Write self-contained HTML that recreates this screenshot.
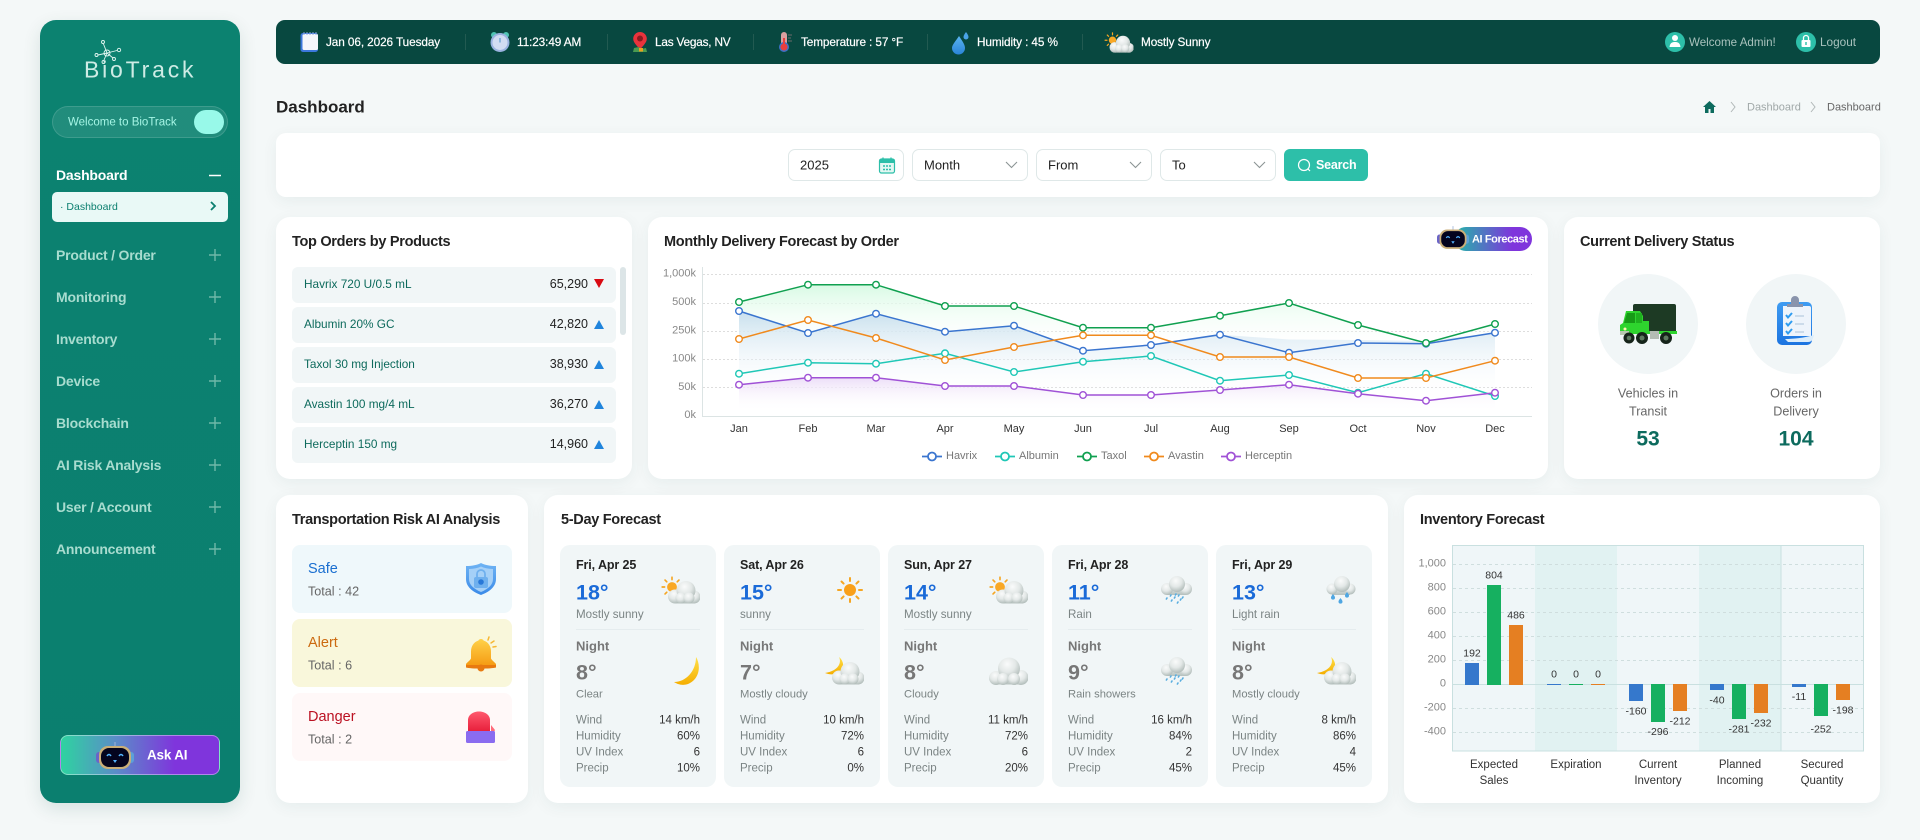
<!DOCTYPE html>
<html lang="en">
<head>
<meta charset="utf-8">
<title>BioTrack Dashboard</title>
<style>
*{box-sizing:border-box}
html,body{margin:0;padding:0;width:1920px;height:840px;overflow:hidden;background:#f4f8f8;font-family:"Liberation Sans",sans-serif;color:#222}
.b{position:absolute}
.card{position:absolute;background:#fff;border-radius:14px;box-shadow:0 4px 16px rgba(0,60,60,.06)}
.t{position:absolute;white-space:nowrap;transform:translateY(-50%);line-height:1}
.r{transform:translate(-100%,-50%)}
.c{transform:translate(-50%,-50%);text-align:center}
.h{font-size:14.5px;font-weight:700;color:#222;letter-spacing:-.3px}
.tb{font-size:11.8px;color:#fff;font-weight:400;-webkit-text-stroke:.2px #fff;letter-spacing:-.1px}
.sep{position:absolute;width:1px;top:34px;height:16px;background:#225a51}
.m{font-size:14px;font-weight:700;color:#a8dccf;left:56px;letter-spacing:-.2px}
.inp{position:absolute;top:149px;height:32px;width:116px;background:#fff;border:1px solid #dfe8e8;border-radius:7px}
.sel{font-size:13px;color:#222;top:165px}
.row{position:absolute;left:292px;width:324px;height:36px;background:#f1f6f7;border-radius:6px}
.nm{left:304px;font-size:11.8px;color:#0d6a5c}
.qt{left:588px;font-size:12.5px;color:#222}
.w{position:absolute;top:545px;width:156px;height:242px;background:#f1f6f7;border-radius:10px}
.d{font-size:12.5px;font-weight:700;color:#222;top:565px;letter-spacing:-.1px}
.tp{font-size:21.5px;font-weight:700;color:#1a6ad8;top:593px}
.cn{font-size:11.6px;color:#7b8484;top:615px}
.dv{position:absolute;height:1px;width:124px;top:629px;background:#e5ecee}
.n{font-size:13px;font-weight:700;color:#777;top:646px}
.tn{font-size:21.5px;font-weight:700;color:#777;top:673px}
.cd{font-size:11.2px;color:#7b8484;top:695px}
.sl{font-size:11.5px;color:#7b8484}
.sv{font-size:11.5px;color:#333}
.s1{top:721px}.s2{top:737px}.s3{top:753px}.s4{top:769px}
.rk{position:absolute;left:292px;width:220px;height:68px;border-radius:8px}
.rl{left:308px;font-size:14.5px}
.rt{left:308px;font-size:12.6px;color:#666}
</style>
</head>
<body>
<!-- Sidebar -->
<div class="b" style="left:40px;top:20px;width:200px;height:783px;border-radius:16px;background:linear-gradient(#0c8270,#0b7f6f);box-shadow:0 6px 18px rgba(0,70,60,.12)"></div>
<div class="t" style="left:84px;top:70px;font-size:23px;letter-spacing:2.8px;color:#dff5ef;font-weight:400;opacity:.92">BioTrack</div>
<div class="b" style="left:52px;top:106px;width:176px;height:32px;border-radius:16px;background:rgba(255,255,255,.09);border:1px solid rgba(255,255,255,.13)"></div>
<div class="t" style="left:68px;top:123px;font-size:11.5px;color:#a5f5e5">Welcome to BioTrack</div>
<div class="b" style="left:194px;top:110px;width:30px;height:24px;border-radius:12px;background:#98f9e9"></div>
<div class="t m" style="top:175px;color:#fff">Dashboard</div>
<div class="b" style="left:52px;top:192px;width:176px;height:30px;border-radius:5px;background:#e9f9f6"></div>
<div class="t" style="left:60px;top:207px;font-size:10.5px;color:#0b7f6f">· Dashboard</div>
<div class="t m" style="top:255px">Product / Order</div>
<div class="t m" style="top:297px">Monitoring</div>
<div class="t m" style="top:339px">Inventory</div>
<div class="t m" style="top:381px">Device</div>
<div class="t m" style="top:423px">Blockchain</div>
<div class="t m" style="top:465px">AI Risk Analysis</div>
<div class="t m" style="top:507px">User / Account</div>
<div class="t m" style="top:549px">Announcement</div>
<div class="b" style="left:60px;top:735px;width:160px;height:40px;border-radius:8px;background:linear-gradient(90deg,#2ed3a0 0%,#5b8cc8 35%,#7f35dc 72%);border:1px solid rgba(255,255,255,.4)"></div>
<div class="t" style="left:147px;top:755px;font-size:13.5px;font-weight:700;color:#fff;letter-spacing:-.2px">Ask AI</div>

<!-- Top bar -->
<div class="b" style="left:276px;top:20px;width:1604px;height:44px;border-radius:9px;background:#084840"></div>
<div class="t tb" style="left:326px;top:43px">Jan 06, 2026 Tuesday</div>
<div class="sep" style="left:465px"></div>
<div class="t tb" style="left:517px;top:43px">11:23:49 AM</div>
<div class="sep" style="left:607px"></div>
<div class="t tb" style="left:655px;top:43px;letter-spacing:-.2px">Las Vegas, NV</div>
<div class="sep" style="left:753px"></div>
<div class="t tb" style="left:801px;top:43px;letter-spacing:-.12px">Temperature : 57 °F</div>
<div class="sep" style="left:927px"></div>
<div class="t tb" style="left:977px;top:43px;letter-spacing:-.12px">Humidity : 45 %</div>
<div class="sep" style="left:1082px"></div>
<div class="t tb" style="left:1141px;top:43px;letter-spacing:-.12px">Mostly Sunny</div>
<div class="t" style="left:1689px;top:43px;font-size:11.6px;color:#a9c2bd">Welcome Admin!</div>
<div class="t" style="left:1820px;top:43px;font-size:11.8px;color:#a9c2bd">Logout</div>

<!-- Heading -->
<div class="t" style="left:276px;top:107px;font-size:17px;font-weight:700;color:#222">Dashboard</div>
<div class="t" style="left:1747px;top:107.500px;font-size:11px;color:#a0a8a8">Dashboard</div>
<div class="t" style="left:1827px;top:107.500px;font-size:11px;color:#666">Dashboard</div>

<!-- Filter -->
<div class="card" style="left:276px;top:133px;width:1604px;height:64px;border-radius:10px"></div>
<div class="inp" style="left:788px"></div>
<div class="inp" style="left:912px"></div>
<div class="inp" style="left:1036px"></div>
<div class="inp" style="left:1160px"></div>
<div class="t sel" style="left:800px">2025</div>
<div class="t sel" style="left:924px">Month</div>
<div class="t sel" style="left:1048px">From</div>
<div class="t sel" style="left:1172px">To</div>
<div class="b" style="left:1284px;top:149px;width:84px;height:32px;border-radius:6px;background:#2dbfa9"></div>
<div class="t" style="left:1316px;top:165px;font-size:12.5px;font-weight:700;color:#fff;letter-spacing:-.2px">Search</div>

<!-- Row 2 cards -->
<div class="card" style="left:276px;top:217px;width:356px;height:262px"></div>
<div class="card" style="left:648px;top:217px;width:900px;height:262px"></div>
<div class="card" style="left:1564px;top:217px;width:316px;height:262px"></div>
<div class="t h" style="left:292px;top:242px">Top Orders by Products</div>
<div class="t h" style="left:664px;top:242px">Monthly Delivery Forecast by Order</div>
<div class="t h" style="left:1580px;top:242px">Current Delivery Status</div>

<!-- Top orders -->
<div class="row" style="top:267px"></div>
<div class="row" style="top:307px"></div>
<div class="row" style="top:347px"></div>
<div class="row" style="top:387px"></div>
<div class="row" style="top:427px"></div>
<div class="b" style="left:620px;top:267px;width:6px;height:68px;border-radius:3px;background:#dce5e7"></div>
<div class="t nm" style="top:285px">Havrix 720 U/0.5 mL</div><div class="t r qt" style="top:284px">65,290</div>
<div class="t nm" style="top:325px">Albumin 20% GC</div><div class="t r qt" style="top:324px">42,820</div>
<div class="t nm" style="top:365px">Taxol 30 mg Injection</div><div class="t r qt" style="top:364px">38,930</div>
<div class="t nm" style="top:405px">Avastin 100 mg/4 mL</div><div class="t r qt" style="top:404px">36,270</div>
<div class="t nm" style="top:445px">Herceptin 150 mg</div><div class="t r qt" style="top:444px">14,960</div>

<!-- AI forecast -->
<div class="b" style="left:1454px;top:227px;width:78px;height:24px;border-radius:12px;background:linear-gradient(90deg,#22b8a8,#7f35dc 75%)"></div>
<div class="t" style="left:1472px;top:240px;font-size:11px;font-weight:700;color:#fff;letter-spacing:-.4px">AI Forecast</div>

<!-- Delivery -->
<div class="b" style="left:1598px;top:274px;width:100px;height:100px;border-radius:50%;background:#f1f6f7"></div>
<div class="b" style="left:1746px;top:274px;width:100px;height:100px;border-radius:50%;background:#f1f6f7"></div>
<div class="t c" style="left:1648px;top:394px;font-size:12.6px;color:#666">Vehicles in</div>
<div class="t c" style="left:1648px;top:412px;font-size:12.6px;color:#666">Transit</div>
<div class="t c" style="left:1648px;top:439px;font-size:21px;font-weight:700;color:#0d6b5e">53</div>
<div class="t c" style="left:1796px;top:394px;font-size:12.6px;color:#666">Orders in</div>
<div class="t c" style="left:1796px;top:412px;font-size:12.6px;color:#666">Delivery</div>
<div class="t c" style="left:1796px;top:439px;font-size:21px;font-weight:700;color:#0d6b5e">104</div>

<!-- Row 3 cards -->
<div class="card" style="left:276px;top:495px;width:252px;height:308px"></div>
<div class="card" style="left:544px;top:495px;width:844px;height:308px"></div>
<div class="card" style="left:1404px;top:495px;width:476px;height:308px"></div>
<div class="t h" style="left:292px;top:520px">Transportation Risk AI Analysis</div>
<div class="t h" style="left:561px;top:520px">5-Day Forecast</div>
<div class="t h" style="left:1420px;top:520px">Inventory Forecast</div>

<!-- Risk -->
<div class="rk" style="top:545px;background:#eff8fb"></div>
<div class="rk" style="top:619px;background:#f9f7db"></div>
<div class="rk" style="top:693px;background:#fff8f8"></div>
<div class="t rl" style="top:569px;color:#1a6fd0">Safe</div><div class="t rt" style="top:592px">Total : 42</div>
<div class="t rl" style="top:643px;color:#cc6a10">Alert</div><div class="t rt" style="top:666px">Total : 6</div>
<div class="t rl" style="top:717px;color:#bb1122">Danger</div><div class="t rt" style="top:740px">Total : 2</div>

<!-- Weather cards -->
<div class="w" style="left:560px"></div><div class="w" style="left:724px"></div><div class="w" style="left:888px"></div><div class="w" style="left:1052px"></div><div class="w" style="left:1216px"></div>
<div class="dv" style="left:576px"></div><div class="dv" style="left:740px"></div><div class="dv" style="left:904px"></div><div class="dv" style="left:1068px"></div><div class="dv" style="left:1232px"></div>

<div class="t d" style="left:576px">Fri, Apr 25</div><div class="t tp" style="left:576px">18°</div><div class="t cn" style="left:576px">Mostly sunny</div><div class="t n" style="left:576px">Night</div><div class="t tn" style="left:576px">8°</div><div class="t cd" style="left:576px">Clear</div>
<div class="t sl s1" style="left:576px">Wind</div><div class="t sl s2" style="left:576px">Humidity</div><div class="t sl s3" style="left:576px">UV Index</div><div class="t sl s4" style="left:576px">Precip</div>
<div class="t r sv s1" style="left:700px">14 km/h</div><div class="t r sv s2" style="left:700px">60%</div><div class="t r sv s3" style="left:700px">6</div><div class="t r sv s4" style="left:700px">10%</div>

<div class="t d" style="left:740px">Sat, Apr 26</div><div class="t tp" style="left:740px">15°</div><div class="t cn" style="left:740px">sunny</div><div class="t n" style="left:740px">Night</div><div class="t tn" style="left:740px">7°</div><div class="t cd" style="left:740px">Mostly cloudy</div>
<div class="t sl s1" style="left:740px">Wind</div><div class="t sl s2" style="left:740px">Humidity</div><div class="t sl s3" style="left:740px">UV Index</div><div class="t sl s4" style="left:740px">Precip</div>
<div class="t r sv s1" style="left:864px">10 km/h</div><div class="t r sv s2" style="left:864px">72%</div><div class="t r sv s3" style="left:864px">6</div><div class="t r sv s4" style="left:864px">0%</div>

<div class="t d" style="left:904px">Sun, Apr 27</div><div class="t tp" style="left:904px">14°</div><div class="t cn" style="left:904px">Mostly sunny</div><div class="t n" style="left:904px">Night</div><div class="t tn" style="left:904px">8°</div><div class="t cd" style="left:904px">Cloudy</div>
<div class="t sl s1" style="left:904px">Wind</div><div class="t sl s2" style="left:904px">Humidity</div><div class="t sl s3" style="left:904px">UV Index</div><div class="t sl s4" style="left:904px">Precip</div>
<div class="t r sv s1" style="left:1028px">11 km/h</div><div class="t r sv s2" style="left:1028px">72%</div><div class="t r sv s3" style="left:1028px">6</div><div class="t r sv s4" style="left:1028px">20%</div>

<div class="t d" style="left:1068px">Fri, Apr 28</div><div class="t tp" style="left:1068px">11°</div><div class="t cn" style="left:1068px">Rain</div><div class="t n" style="left:1068px">Night</div><div class="t tn" style="left:1068px">9°</div><div class="t cd" style="left:1068px">Rain showers</div>
<div class="t sl s1" style="left:1068px">Wind</div><div class="t sl s2" style="left:1068px">Humidity</div><div class="t sl s3" style="left:1068px">UV Index</div><div class="t sl s4" style="left:1068px">Precip</div>
<div class="t r sv s1" style="left:1192px">16 km/h</div><div class="t r sv s2" style="left:1192px">84%</div><div class="t r sv s3" style="left:1192px">2</div><div class="t r sv s4" style="left:1192px">45%</div>

<div class="t d" style="left:1232px">Fri, Apr 29</div><div class="t tp" style="left:1232px">13°</div><div class="t cn" style="left:1232px">Light rain</div><div class="t n" style="left:1232px">Night</div><div class="t tn" style="left:1232px">8°</div><div class="t cd" style="left:1232px">Mostly cloudy</div>
<div class="t sl s1" style="left:1232px">Wind</div><div class="t sl s2" style="left:1232px">Humidity</div><div class="t sl s3" style="left:1232px">UV Index</div><div class="t sl s4" style="left:1232px">Precip</div>
<div class="t r sv s1" style="left:1356px">8 km/h</div><div class="t r sv s2" style="left:1356px">86%</div><div class="t r sv s3" style="left:1356px">4</div><div class="t r sv s4" style="left:1356px">45%</div>

<!-- Graphics overlay -->
<svg class="b" style="left:0;top:0" width="1920" height="840" viewBox="0 0 1920 840" font-family="Liberation Sans, sans-serif">
<defs>
<radialGradient id="pf" cx=".42" cy=".3" r=".75"><stop offset="0" stop-color="#fafbfb"/><stop offset=".5" stop-color="#e3e8e7"/><stop offset="1" stop-color="#aab6b3"/></radialGradient>
<linearGradient id="cb" x1="0" y1="0" x2="0" y2="1"><stop offset="0" stop-color="#e0e5e4"/><stop offset="1" stop-color="#b6c1be"/></linearGradient>
<linearGradient id="mg" x1="0" y1="0" x2="0" y2="1"><stop offset="0" stop-color="#ffe04a"/><stop offset="1" stop-color="#f5ae00"/></linearGradient>
<linearGradient id="ag" x1="0" y1="0" x2="0" y2="1"><stop offset="0" stop-color="#ffd24a"/><stop offset="1" stop-color="#f59a12"/></linearGradient>
<linearGradient id="sg" x1="0" y1="0" x2="0" y2="1"><stop offset="0" stop-color="#6fb4f4"/><stop offset="1" stop-color="#3a8ae8"/></linearGradient>
<linearGradient id="rg" x1="0" y1="0" x2="0" y2="1"><stop offset="0" stop-color="#ff5a6e"/><stop offset="1" stop-color="#e8203c"/></linearGradient>
<linearGradient id="dg" x1="0" y1="0" x2="0" y2="1"><stop offset="0" stop-color="#5ab4f0"/><stop offset="1" stop-color="#2a84d8"/></linearGradient>
<linearGradient id="cpb" x1="0" y1="0" x2="0" y2="1"><stop offset="0" stop-color="#3f9cf2"/><stop offset="1" stop-color="#1c74e0"/></linearGradient>
<linearGradient id="a1" gradientUnits="userSpaceOnUse" x1="0" y1="285" x2="0" y2="350"><stop offset="0" stop-color="#d8fae4"/><stop offset="1" stop-color="#fff" stop-opacity="0"/></linearGradient>
<linearGradient id="a2" gradientUnits="userSpaceOnUse" x1="0" y1="311" x2="0" y2="398"><stop offset="0" stop-color="#c9e0ee"/><stop offset="1" stop-color="#fff" stop-opacity="0"/></linearGradient>
<linearGradient id="a3" gradientUnits="userSpaceOnUse" x1="0" y1="378" x2="0" y2="412"><stop offset="0" stop-color="#eddff8"/><stop offset="1" stop-color="#fff" stop-opacity="0"/></linearGradient>
<marker id="mH" markerWidth="10" markerHeight="10" refX="5" refY="5" markerUnits="userSpaceOnUse"><circle cx="5" cy="5" r="3.3" fill="#fff" stroke="#3a75cf" stroke-width="1.4"/></marker>
<marker id="mA" markerWidth="10" markerHeight="10" refX="5" refY="5" markerUnits="userSpaceOnUse"><circle cx="5" cy="5" r="3.3" fill="#fff" stroke="#1fc7b6" stroke-width="1.4"/></marker>
<marker id="mT" markerWidth="10" markerHeight="10" refX="5" refY="5" markerUnits="userSpaceOnUse"><circle cx="5" cy="5" r="3.3" fill="#fff" stroke="#10a050" stroke-width="1.4"/></marker>
<marker id="mV" markerWidth="10" markerHeight="10" refX="5" refY="5" markerUnits="userSpaceOnUse"><circle cx="5" cy="5" r="3.3" fill="#fff" stroke="#f08a1d" stroke-width="1.4"/></marker>
<marker id="mC" markerWidth="10" markerHeight="10" refX="5" refY="5" markerUnits="userSpaceOnUse"><circle cx="5" cy="5" r="3.3" fill="#fff" stroke="#a052d6" stroke-width="1.4"/></marker>
<g id="sunrays" stroke="#f5a623" stroke-width="2" stroke-linecap="round"><path d="M0 -9V-12M0 9V12M-9 0H-12M9 0H12M-6.4 -6.4L-8.5 -8.5M6.4 -6.4L8.5 -8.5M-6.4 6.4L-8.5 8.5M6.4 6.4L8.5 8.5"/></g>
<symbol id="cloudA" viewBox="0 0 40 28"><rect x="15" y="19" width="20" height="8.500" fill="url(#cb)"/><circle cx="15" cy="20.500" r="7" fill="url(#pf)"/><circle cx="34" cy="21" r="6.500" fill="url(#pf)"/><circle cx="26" cy="14.500" r="9.500" fill="url(#pf)"/><circle cx="21" cy="22" r="5.500" fill="url(#pf)"/><circle cx="29" cy="22" r="5.500" fill="url(#pf)"/></symbol>
<symbol id="sc" viewBox="0 0 40 28"><g transform="translate(12 11) scale(.82)"><use href="#sunrays"/><circle r="6" fill="#f9a825"/></g><use href="#cloudA" width="40" height="28"/></symbol>
<symbol id="sn" viewBox="0 0 40 28"><g transform="translate(26 14)"><use href="#sunrays"/><circle r="6" fill="#f9a01a"/></g></symbol>
<symbol id="mn" viewBox="0 0 40 28"><path d="M36 0C41 8 40 22 28 27C22 29 17 27 14 25C26 25 36 14 36 0Z" fill="url(#mg)"/></symbol>
<symbol id="mc" viewBox="0 0 40 28"><path d="M15 0C18 6 14 14 1 16C6 18 12 18 17 14C21 10 19 3 15 0Z" fill="url(#mg)"/><use href="#cloudA" width="40" height="28"/></symbol>
<symbol id="cl" viewBox="0 0 40 28"><rect x="8" y="19" width="25" height="8.500" fill="url(#cb)"/><circle cx="8" cy="21" r="7" fill="url(#pf)"/><circle cx="33" cy="20.500" r="7.500" fill="url(#pf)"/><circle cx="21" cy="11.500" r="11" fill="url(#pf)"/><circle cx="15" cy="22" r="6" fill="url(#pf)"/><circle cx="26" cy="22" r="6" fill="url(#pf)"/></symbol>
<symbol id="rc" viewBox="0 0 40 28"><rect x="15" y="12" width="19" height="7" fill="url(#cb)"/><circle cx="15" cy="13" r="6" fill="url(#pf)"/><circle cx="34" cy="13" r="6" fill="url(#pf)"/><circle cx="25" cy="8" r="8" fill="url(#pf)"/><g stroke="#5aaee0" stroke-width="1.600" stroke-linecap="round"><path d="M15 22l-.6 1M19 19l-.6 1M23 21l-.6 1M27 19l-.6 1M31 21l-.6 1M20 24l-.6 1M26 26l-.6 1M29 23l-.6 1M24 18l-.6 1"/></g></symbol>
<symbol id="lr" viewBox="0 0 40 28"><rect x="16" y="12" width="18" height="7" fill="url(#cb)"/><circle cx="16" cy="13" r="5.500" fill="url(#pf)"/><circle cx="34" cy="13" r="5.500" fill="url(#pf)"/><circle cx="26" cy="8" r="8" fill="url(#pf)"/><g fill="#4ea6e2"><path d="M17 18c1.500 2 2 2.800 2 3.600a2 2 0 0 1-4 0c0-.8.500-1.600 2-3.600ZM31 16c1.500 2 2 2.800 2 3.600a2 2 0 0 1-4 0c0-.8.500-1.600 2-3.600ZM24.500 22c1.500 2 2 2.800 2 3.600a2 2 0 0 1-4 0c0-.8.500-1.600 2-3.600Z"/></g></symbol>
<symbol id="robot" viewBox="0 0 38 27"><path d="M19 0V5" stroke="#9fb4d8" stroke-width="1"/><rect x="0" y="10" width="6" height="11" rx="3" fill="#6a64c8"/><rect x="32" y="10" width="6" height="11" rx="3" fill="#5ca0d8"/><rect x="3" y="4" width="32" height="23" rx="9" fill="#c9ae78"/><rect x="5" y="6" width="28" height="19" rx="8" fill="#04041e"/><path d="M11 14q2-3 4 0M23 14q2-3 4 0" fill="none" stroke="#54b4ff" stroke-width="1.500"/><path d="M17 18h4l-2 3Z" fill="#54b4ff"/></symbol>
</defs>

<!-- Logo -->
<g stroke="#e2f6f1" fill="none" stroke-width=".9">
<path d="M107 53L103.500 44M107 53L117 50.500M107 53L98 55M107 53L113 58M107 53L104 60"/>
<circle cx="107" cy="53" r="3"/><circle cx="103" cy="42" r="1.500"/><circle cx="119" cy="50" r="1.700"/><circle cx="96.500" cy="55" r="1.500"/><circle cx="114" cy="59" r="1.500"/><circle cx="103.500" cy="62" r="1.500"/>
</g>
<!-- Sidebar marks -->
<path d="M209 175.500H221" stroke="#fff" stroke-width="1.500"/>
<path d="M211 202l4 4-4 4" stroke="#0b7f6f" stroke-width="1.800" fill="none"/>
<g stroke="#6fb8a8" stroke-width="1.400"><path d="M209 255H221M215 249V261M209 297H221M215 291V303M209 339H221M215 333V345M209 381H221M215 375V387M209 423H221M215 417V429M209 465H221M215 459V471M209 507H221M215 501V513M209 549H221M215 543V555"/></g>
<use href="#robot" x="96" y="742" width="38" height="27"/>

<!-- Top bar icons -->
<g>
<rect x="300.500" y="33" width="17.500" height="19" rx="2.500" fill="#3c78dc"/><rect x="302.500" y="34" width="15.500" height="16" rx="1.500" fill="#f4f6fb"/><path d="M304 32v3M307 32v3M310 32v3M313 32v3M316 32v3" stroke="#8fa6d8" stroke-width="1"/>
<circle cx="494" cy="35" r="3" fill="#4fc4b4"/><circle cx="506" cy="35" r="3" fill="#4fc4b4"/><circle cx="500" cy="42.500" r="9.500" fill="#9bb3e0"/><circle cx="500" cy="42.500" r="7.500" fill="#d2dcf2"/><path d="M500 38v4.500" stroke="#4a90c8" stroke-width="1"/>
<path d="M640 32a6.800 6.800 0 0 1 6.800 6.800c0 4-4 7-6.800 11c-2.800-4-6.800-7-6.800-11A6.800 6.800 0 0 1 640 32Z" fill="#e8333c"/><circle cx="640" cy="38.500" r="3" fill="#8c1a20"/><path d="M634 48l5-1 2 2 5-1 1 4h-14Z" fill="#4a9a50"/><rect x="639" y="48" width="4" height="3.500" fill="#e8a020"/>
<rect x="781" y="32" width="6" height="17" rx="3" fill="#d9a0a0"/><circle cx="784" cy="47" r="5" fill="#3b72c8"/><circle cx="784" cy="47" r="3.500" fill="#e83e3e"/><rect x="783" y="38" width="2" height="8" fill="#e83e3e"/><path d="M788 35h4M788 38h3M788 41h4" stroke="#6a6a6a" stroke-width="1"/>
<path d="M959 36c4 6 6 9 6 12a6.500 6.500 0 0 1-13 0c0-3 3-6 7-12Z" fill="url(#dg)"/><path d="M966 32c1.500 2 2.500 3.500 2.500 5a2.500 2.500 0 0 1-5 0c0-1.500 1-3 2.500-5Z" fill="#4aa4e6"/>
<use href="#sc" x="1103" y="32" width="31" height="21"/>
<circle cx="1675" cy="42" r="10" fill="#2dbfa9"/><circle cx="1675" cy="38" r="3" fill="#fff"/><path d="M1669.500 47c.5-4 2.500-5 5.500-5s5 1 5.500 5Z" fill="#fff"/>
<circle cx="1806" cy="42" r="10" fill="#2dbfa9"/><rect x="1801.500" y="40" width="9" height="7" rx="1" fill="#fff"/><path d="M1803.500 40v-2a2.500 2.500 0 0 1 5 0v2" fill="none" stroke="#fff" stroke-width="1.300"/><rect x="1805.300" y="42" width="1.400" height="3" fill="#2dbfa9"/>
</g>

<!-- Breadcrumb -->
<path d="M1709.500 101l-6.500 6h2v6h3.500v-4h2v4h3.500v-6h2Z" fill="#0d6b5e"/>
<path d="M1731 102l4 5-4 5M1811 102l4 5-4 5" stroke="#b0b8b8" fill="none" stroke-width="1"/>

<!-- Filter icons -->
<rect x="879.500" y="159" width="15" height="14" rx="2" fill="#e3f7f2" stroke="#2dbfa9" stroke-width="1.200"/><rect x="879.500" y="159" width="15" height="4" fill="#2dbfa9"/><path d="M883 157.500v3M891 157.500v3" stroke="#2dbfa9" stroke-width="1.300"/><path d="M883 166h8M883 169.500h8" stroke="#2dbfa9" stroke-width="1.600" stroke-dasharray="2 1"/>
<path d="M1006 162l5.500 5.500 5.500-5.500M1130 162l5.500 5.500 5.500-5.500M1254 162l5.500 5.500 5.500-5.500" fill="none" stroke="#8b9494" stroke-width="1.100"/>
<circle cx="1304" cy="165" r="5.500" fill="none" stroke="#fff" stroke-width="1.200"/><path d="M1308 169l2 2" stroke="#fff" stroke-width="1.200"/>

<!-- Order triangles -->
<path d="M594 279h10l-5 9Z" fill="#d90a12"/>
<path d="M594 329h10l-5-9ZM594 369h10l-5-9ZM594 409h10l-5-9ZM594 449h10l-5-9Z" fill="#2084dc"/>

<!-- Line chart -->
<g stroke="#ddd" stroke-dasharray="2 2" stroke-width="1"><path d="M703 274.500H1532M703 303.500H1532M703 331.500H1532M703 359.500H1532M703 387.500H1532"/></g>
<path d="M702.500 267V416.500H1532" fill="none" stroke="#dce4e4" stroke-width="1"/>
<polygon points="739,302 808,284.700 876,284.700 945,306 1014,306 1083,327.700 1151,327.700 1220,315.700 1289,303 1358,325 1426,343 1495,324 1495,412 739,412" fill="url(#a1)"/>
<polygon points="739,311 808,333 876,313.700 945,331.700 1014,325.700 1083,350.700 1151,345 1220,334.700 1289,339.500 1358,340 1426,341 1495,332.700 1495,412 739,412" fill="url(#a2)"/>
<polygon points="739,384.700 808,377.700 876,377.700 945,386 1014,386 1083,395 1151,395 1220,390 1289,384.700 1358,393.700 1426,400.700 1495,392.700 1495,412 739,412" fill="url(#a3)"/>
<g fill="none" stroke-width="1.500">
<polyline stroke="#3a75cf" marker-start="url(#mH)" marker-mid="url(#mH)" marker-end="url(#mH)" points="739,311 808,333 876,313.700 945,331.700 1014,325.700 1083,350.700 1151,345 1220,334.700 1289,352.700 1358,343 1426,343.700 1495,332.700"/>
<polyline stroke="#1fc7b6" marker-start="url(#mA)" marker-mid="url(#mA)" marker-end="url(#mA)" points="739,373.700 808,362.700 876,363.700 945,353.300 1014,372 1083,361.700 1151,356 1220,380.700 1289,375 1358,392.700 1426,373.700 1495,396"/>
<polyline stroke="#10a050" marker-start="url(#mT)" marker-mid="url(#mT)" marker-end="url(#mT)" points="739,302 808,284.700 876,284.700 945,306 1014,306 1083,327.700 1151,327.700 1220,315.700 1289,303 1358,325 1426,343 1495,324"/>
<polyline stroke="#f08a1d" marker-start="url(#mV)" marker-mid="url(#mV)" marker-end="url(#mV)" points="739,339 808,320 876,338 945,360 1014,347 1083,335.300 1151,335.300 1220,357 1289,357 1358,378 1426,378 1495,360.700"/>
<polyline stroke="#a052d6" marker-start="url(#mC)" marker-mid="url(#mC)" marker-end="url(#mC)" points="739,384.700 808,377.700 876,377.700 945,386 1014,386 1083,395 1151,395 1220,390 1289,384.700 1358,393.700 1426,400.700 1495,392.700"/>
</g>
<g font-size="11" fill="#888" text-anchor="end" dominant-baseline="central"><text x="696" y="273.500">1,000k</text><text x="696" y="302">500k</text><text x="696" y="330.500">250k</text><text x="696" y="358.500">100k</text><text x="696" y="387">50k</text><text x="696" y="415">0k</text></g>
<g font-size="11" fill="#333" text-anchor="middle" dominant-baseline="central"><text x="739" y="429">Jan</text><text x="808" y="429">Feb</text><text x="876" y="429">Mar</text><text x="945" y="429">Apr</text><text x="1014" y="429">May</text><text x="1083" y="429">Jun</text><text x="1151" y="429">Jul</text><text x="1220" y="429">Aug</text><text x="1289" y="429">Sep</text><text x="1358" y="429">Oct</text><text x="1426" y="429">Nov</text><text x="1495" y="429">Dec</text></g>
<g fill="#fff" stroke-width="1.800">
<path d="M922 456.500H942" stroke="#3a75cf"/><circle cx="932" cy="456.500" r="4" stroke="#3a75cf"/>
<path d="M995 456.500H1015" stroke="#1fc7b6"/><circle cx="1005" cy="456.500" r="4" stroke="#1fc7b6"/>
<path d="M1077 456.500H1097" stroke="#10a050"/><circle cx="1087" cy="456.500" r="4" stroke="#10a050"/>
<path d="M1144 456.500H1164" stroke="#f08a1d"/><circle cx="1154" cy="456.500" r="4" stroke="#f08a1d"/>
<path d="M1221 456.500H1241" stroke="#a052d6"/><circle cx="1231" cy="456.500" r="4" stroke="#a052d6"/>
</g>
<g font-size="11" fill="#777" dominant-baseline="central"><text x="946" y="456">Havrix</text><text x="1019" y="456">Albumin</text><text x="1101" y="456">Taxol</text><text x="1168" y="456">Avastin</text><text x="1245" y="456">Herceptin</text></g>
<use href="#robot" x="1437" y="225" width="32" height="25"/>

<!-- Truck -->
<g>
<rect x="1633" y="304" width="43" height="29" rx="2" fill="#1d3a24"/>
<path d="M1620 334v-9l3-2 3-12h14l3 5v5h6v13h-29Z" fill="#2ed42e"/><path d="M1627 313h8v10h-11Z" fill="#179a17"/><rect x="1636" y="313" width="6" height="10" fill="#1fb01f"/><rect x="1649" y="331" width="28" height="3" fill="#2ed42e"/><rect x="1620" y="331" width="9" height="4" fill="#b8c8b0"/><circle cx="1625" cy="329" r="1.500" fill="#fff7b0"/><rect x="1650" y="331" width="9" height="8" fill="#b4bcb4"/>
<circle cx="1629" cy="338" r="5.500" fill="#16241a"/><circle cx="1629" cy="338" r="2.300" fill="#5e7a60"/><circle cx="1642" cy="338" r="6" fill="#16241a"/><circle cx="1642" cy="338" r="2.500" fill="#5e7a60"/><circle cx="1666" cy="338" r="6" fill="#16241a"/><circle cx="1666" cy="338" r="2.500" fill="#5e7a60"/>
</g>
<!-- Clipboard -->
<g>
<rect x="1777" y="302" width="35" height="43" rx="5" fill="url(#cpb)"/>
<path d="M1783 306h26a2 2 0 0 1 2 2v28h-28Z" fill="#eef4fb"/>
<path d="M1791 304v-4a4 4 0 0 1 8 0v4h4v3h-16v-3Z" fill="#8a94ac"/>
<path d="M1786 315l2 2.500 4-4.500M1786 323l2 2.500 4-4.500M1786 331l2 2.500 4-4.500" fill="none" stroke="#2f9cf0" stroke-width="2"/>
<path d="M1795 316h9M1795 324h9M1795 332h9" stroke="#b8cce0" stroke-width="1.300"/>
<path d="M1785 339c8 0 19-1 29-4-1 4-2 7-6 7h-20Z" fill="#dcedfb"/>
</g>

<!-- Risk icons -->
<path d="M481 563c4 2 9 3 15 3v13c0 8-7 13-15 16-8-3-15-8-15-16v-13c6 0 11-1 15-3Z" fill="url(#sg)"/><path d="M481 566.500c3 1.500 7 2.300 12 2.500v10c0 6-5 10-12 13-7-3-12-7-12-13v-10c5-.2 9-1 12-2.500Z" fill="#a5d0f7"/><rect x="474" y="577" width="14" height="11" rx="2" fill="#6fb0ee"/><path d="M477 577v-3a4 4 0 0 1 8 0v3" fill="none" stroke="#6fb0ee" stroke-width="1.800"/><circle cx="481" cy="582" r="2.800" fill="#2878d8"/>
<path d="M481 639c1.500 0 2.500 1 2.500 1.500c5 1.500 7.500 6 7.500 11v7c1 2 3.500 3.500 5 5.500v2h-30v-2c1.500-2 4-3.500 5-5.500v-7c0-5 2.500-9.500 7.500-11c0-.5 1-1.500 2.500-1.500Z" fill="url(#ag)"/><path d="M466 665h30v2.500c-5 1.500-25 1.500-30 0Z" fill="#e87a10"/><circle cx="481" cy="668" r="3.500" fill="#e87a10"/><path d="M488 640l1-3M491 643l3-2M493 647l3-.5" stroke="#f7b733" stroke-width="1.500" stroke-linecap="round"/>
<path d="M468 731v-11c0-5 5-8.500 11-8.500s11 3.500 11 8.500v11Z" fill="url(#rg)"/><path d="M491 725l4 5-1 2h-3Z" fill="#ff6a7a"/><rect x="466" y="731" width="29" height="12" rx="1.500" fill="#8a6cf0"/>

<!-- Weather icons -->
<use href="#sc" x="660" y="576" width="40" height="28"/><use href="#mn" x="660" y="657" width="40" height="28"/>
<use href="#sn" x="824" y="576" width="40" height="28"/><use href="#mc" x="824" y="657" width="40" height="28"/>
<use href="#sc" x="988" y="576" width="40" height="28"/><use href="#cl" x="988" y="657" width="40" height="28"/>
<use href="#rc" x="1152" y="576" width="40" height="28"/><use href="#rc" x="1152" y="657" width="40" height="28"/>
<use href="#lr" x="1316" y="576" width="40" height="28"/><use href="#mc" x="1316" y="657" width="40" height="28"/>

<!-- Inventory chart -->
<rect x="1452.500" y="545.500" width="411" height="205.500" fill="#eff6f8"/>
<rect x="1535" y="546" width="82" height="205" fill="#e1f2f2"/><rect x="1699" y="546" width="82" height="205" fill="#e1f2f2"/>
<g stroke="#cfdede" stroke-width="1" stroke-dasharray="3 3"><path d="M1453 564.500H1863M1453 588.500H1863M1453 612.500H1863M1453 636.500H1863M1453 660.500H1863M1453 708.500H1863M1453 732.500H1863"/></g>
<path d="M1453 684.500H1863" stroke="#c9e0e0" stroke-width="1"/><path d="M1781 546V751" stroke="#c9e0e0" stroke-width="1"/>
<rect x="1452.500" y="545.500" width="411" height="205.500" fill="none" stroke="#c9e0e0" stroke-width="1"/>
<g fill="#3578cc"><rect x="1465" y="663" width="14" height="22"/><rect x="1547" y="684" width="14" height="1"/><rect x="1629" y="684" width="14" height="17"/><rect x="1710" y="684" width="14" height="6"/><rect x="1792" y="684" width="14" height="3"/></g>
<g fill="#16b060"><rect x="1487" y="585" width="14" height="100"/><rect x="1569" y="684" width="14" height="1"/><rect x="1651" y="684" width="14" height="38"/><rect x="1732" y="684" width="14" height="35"/><rect x="1814" y="684" width="14" height="32"/></g>
<g fill="#e57f22"><rect x="1509" y="625" width="14" height="60"/><rect x="1591" y="684" width="14" height="1"/><rect x="1673" y="684" width="14" height="27"/><rect x="1754" y="684" width="14" height="29"/><rect x="1836" y="684" width="14" height="16"/></g>
<g font-size="11" fill="#888" text-anchor="end" dominant-baseline="central"><text x="1446" y="563.500">1,000</text><text x="1446" y="587.500">800</text><text x="1446" y="611.500">600</text><text x="1446" y="635.500">400</text><text x="1446" y="659.500">200</text><text x="1446" y="683.500">0</text><text x="1446" y="707.500">-200</text><text x="1446" y="731.500">-400</text></g>
<g font-size="10.500" fill="#333" text-anchor="middle" dominant-baseline="central"><text x="1472" y="653.500">192</text><text x="1494" y="575.500">804</text><text x="1516" y="615.500">486</text><text x="1554" y="674.500">0</text><text x="1576" y="674.500">0</text><text x="1598" y="674.500">0</text><text x="1636" y="711.500">-160</text><text x="1658" y="732">-296</text><text x="1680" y="721.500">-212</text><text x="1717" y="700.500">-40</text><text x="1739" y="729.500">-281</text><text x="1761" y="723.500">-232</text><text x="1799" y="697">-11</text><text x="1821" y="729.500">-252</text><text x="1843" y="710.500">-198</text></g>
<g font-size="11.500" fill="#333" text-anchor="middle" dominant-baseline="central"><text x="1494" y="765">Expected</text><text x="1494" y="781">Sales</text><text x="1576" y="765">Expiration</text><text x="1658" y="765">Current</text><text x="1658" y="781">Inventory</text><text x="1740" y="765">Planned</text><text x="1740" y="781">Incoming</text><text x="1822" y="765">Secured</text><text x="1822" y="781">Quantity</text></g>
</svg>
</body>
</html>
